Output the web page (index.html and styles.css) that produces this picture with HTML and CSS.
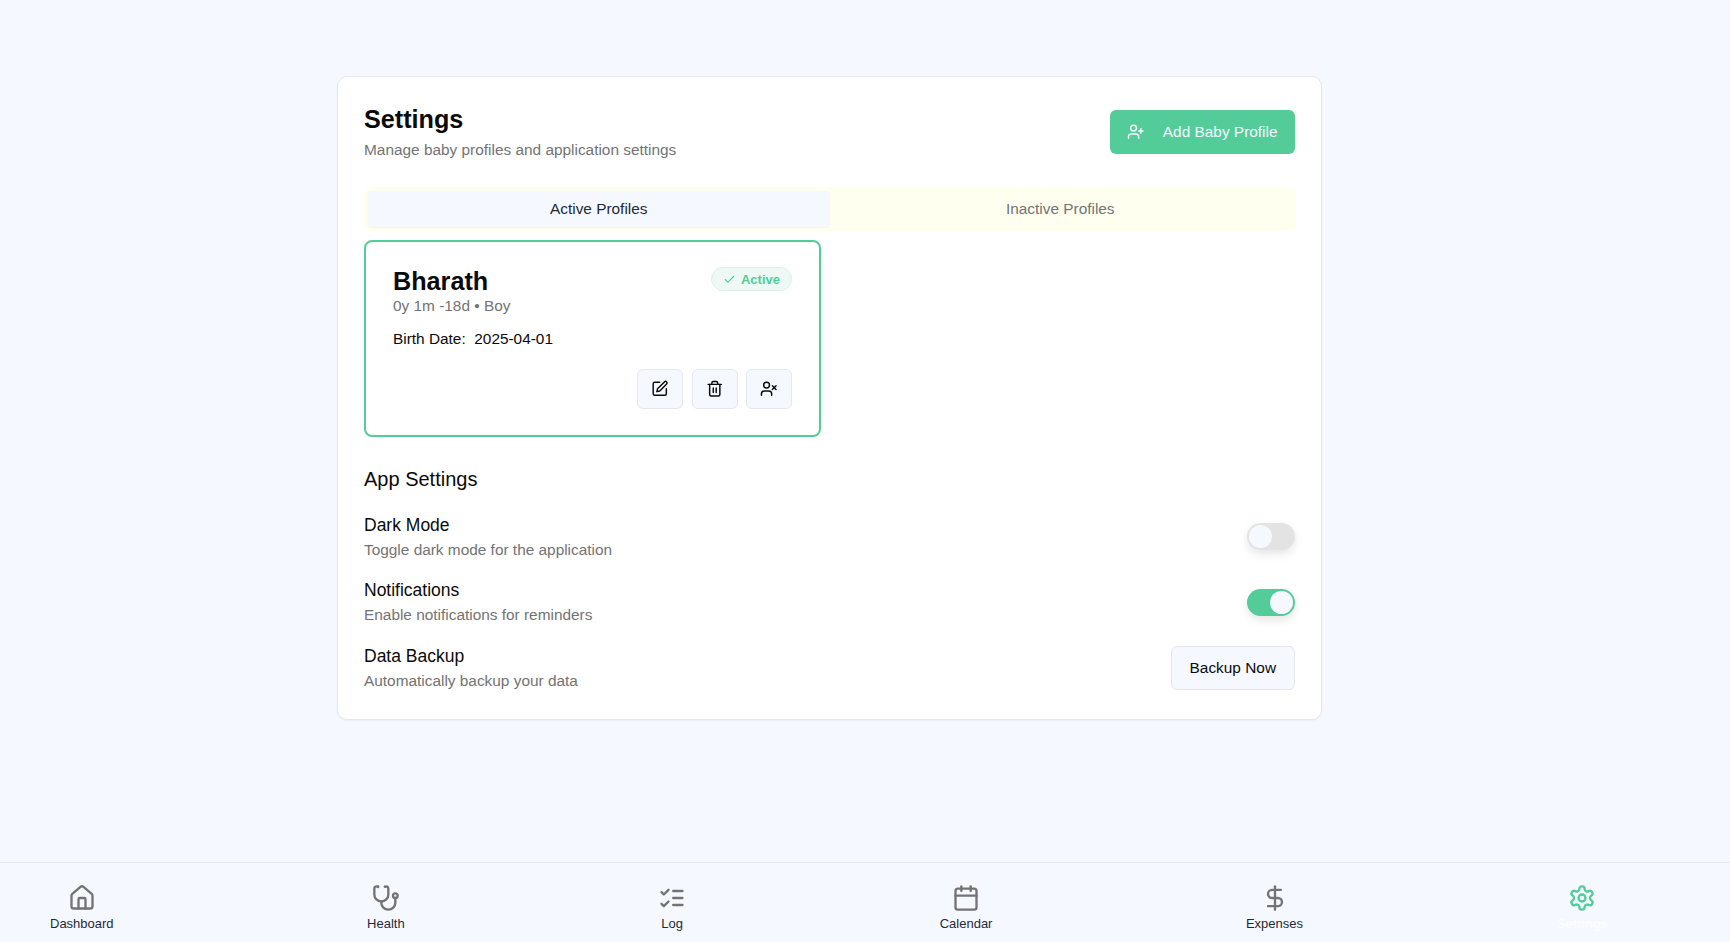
FILE: index.html
```html
<!DOCTYPE html>
<html lang="en">
<head>
  <meta charset="UTF-8" />
  <meta name="viewport" content="width=device-width, initial-scale=1" />
  <title>Settings</title>
  <link rel="stylesheet" href="styles.css">
</head>
<body>
  <main class="page">
    <section class="card">
      <header class="head">
        <div>
          <h1>Settings</h1>
          <p class="muted sub">Manage baby profiles and application settings</p>
        </div>
        <button class="add-btn">
          <svg class="icon" viewBox="0 0 24 24"><path d="M16 21v-2a4 4 0 0 0-4-4H6a4 4 0 0 0-4 4v2"/><circle cx="9" cy="7" r="4"/><path d="M19 8v6"/><path d="M22 11h-6"/></svg>
          <span>Add Baby Profile</span>
        </button>
      </header>

      <div class="tabs">
        <div class="tab on">Active Profiles</div>
        <div class="tab">Inactive Profiles</div>
      </div>

      <div class="profiles">
        <article class="profile">
          <div class="profile-top">
            <div>
              <h2>Bharath</h2>
              <p class="muted age">0y 1m -18d • Boy</p>
            </div>
            <span class="badge">
              <svg viewBox="0 0 24 24"><path d="M20 6 9 17l-5-5"/></svg>
              Active
            </span>
          </div>
          <p class="birth">Birth Date:&nbsp; 2025-04-01</p>
          <div class="actions">
            <button class="act"><svg class="icon" viewBox="0 0 24 24"><path d="M12 3H5a2 2 0 0 0-2 2v14a2 2 0 0 0 2 2h14a2 2 0 0 0 2-2v-7"/><path d="M18.4 2.6a2.1 2.1 0 1 1 3 3L12 15l-4 1 1-4Z"/></svg></button>
            <button class="act"><svg class="icon" viewBox="0 0 24 24"><path d="M3 6h18"/><path d="M19 6v14a2 2 0 0 1-2 2H7a2 2 0 0 1-2-2V6"/><path d="M8 6V4a2 2 0 0 1 2-2h4a2 2 0 0 1 2 2v2"/><path d="M10 11v6"/><path d="M14 11v6"/></svg></button>
            <button class="act"><svg class="icon" viewBox="0 0 24 24"><path d="M16 21v-2a4 4 0 0 0-4-4H6a4 4 0 0 0-4 4v2"/><circle cx="9" cy="7" r="4"/><path d="m17 8 5 5"/><path d="m22 8-5 5"/></svg></button>
          </div>
        </article>
      </div>

      <h3>App Settings</h3>
      <div class="rows">
        <div class="row">
          <div class="row-text">
            <div class="row-title">Dark Mode</div>
            <p class="muted">Toggle dark mode for the application</p>
          </div>
          <span class="switch"><span class="knob"></span></span>
        </div>
        <div class="row">
          <div class="row-text">
            <div class="row-title">Notifications</div>
            <p class="muted">Enable notifications for reminders</p>
          </div>
          <span class="switch on"><span class="knob"></span></span>
        </div>
        <div class="row">
          <div class="row-text">
            <div class="row-title">Data Backup</div>
            <p class="muted">Automatically backup your data</p>
          </div>
          <button class="backup">Backup Now</button>
        </div>
      </div>
    </section>
  </main>

  <nav class="bottom-nav">
    <a class="nav-item"><svg class="icon" viewBox="0 0 24 24"><path d="M15 21v-8a1 1 0 0 0-1-1h-4a1 1 0 0 0-1 1v8"/><path d="M3 10a2 2 0 0 1 .7-1.5l7-6a2 2 0 0 1 2.6 0l7 6A2 2 0 0 1 21 10v9a2 2 0 0 1-2 2H5a2 2 0 0 1-2-2z"/></svg><span>Dashboard</span></a>
    <a class="nav-item"><svg class="icon" viewBox="0 0 24 24"><path d="M4.8 2.3A.3.3 0 1 0 5 2H4a2 2 0 0 0-2 2v5a6 6 0 0 0 6 6 6 6 0 0 0 6-6V4a2 2 0 0 0-2-2h-1a.2.2 0 1 0 .3.3"/><path d="M8 15v1a6 6 0 0 0 6 6 6 6 0 0 0 6-6v-4"/><circle cx="20" cy="10" r="2"/></svg><span>Health</span></a>
    <a class="nav-item"><svg class="icon" viewBox="0 0 24 24"><path d="m3 17 2 2 4-4"/><path d="m3 7 2 2 4-4"/><path d="M13 6h8"/><path d="M13 12h8"/><path d="M13 18h8"/></svg><span>Log</span></a>
    <a class="nav-item"><svg class="icon" viewBox="0 0 24 24"><path d="M8 2v4"/><path d="M16 2v4"/><rect x="3" y="4" width="18" height="18" rx="2"/><path d="M3 10h18"/></svg><span>Calendar</span></a>
    <a class="nav-item"><svg class="icon" viewBox="0 0 24 24"><path d="M12 2v20"/><path d="M17 5H9.500a3.500 3.500 0 0 0 0 7h5a3.500 3.500 0 0 1 0 7H6"/></svg><span>Expenses</span></a>
    <a class="nav-item current"><svg class="icon" viewBox="0 0 24 24"><path d="M12.22 2h-.44a2 2 0 0 0-2 2v.18a2 2 0 0 1-1 1.73l-.43.25a2 2 0 0 1-2 0l-.15-.08a2 2 0 0 0-2.73.73l-.22.38a2 2 0 0 0 .73 2.73l.15.1a2 2 0 0 1 1 1.72v.51a2 2 0 0 1-1 1.74l-.15.09a2 2 0 0 0-.73 2.73l.22.38a2 2 0 0 0 2.73.73l.15-.08a2 2 0 0 1 2 0l.43.25a2 2 0 0 1 1 1.73V20a2 2 0 0 0 2 2h.44a2 2 0 0 0 2-2v-.18a2 2 0 0 1 1-1.73l.43-.25a2 2 0 0 1 2 0l.15.08a2 2 0 0 0 2.73-.73l.22-.39a2 2 0 0 0-.73-2.73l-.15-.08a2 2 0 0 1-1-1.74v-.5a2 2 0 0 1 1-1.74l.15-.09a2 2 0 0 0 .73-2.73l-.22-.38a2 2 0 0 0-2.73-.73l-.15.08a2 2 0 0 1-2 0l-.43-.25a2 2 0 0 1-1-1.73V4a2 2 0 0 0-2-2z"/><circle cx="12" cy="12" r="3"/></svg><span>Settings</span></a>
  </nav>
</body>
</html>
```

FILE: styles.css
```css
html, body {
  height: 100%;
  margin: 0;
}

body {
  display: flex;
  flex-direction: column;
  overflow: hidden;
  background: #f5f9ff;
  color: #0a0a0a;
  font-family: "Liberation Sans", Arial, sans-serif;
}

h1, h2, h3, p {
  margin: 0;
}

button {
  font-family: inherit;
  cursor: pointer;
}

.icon {
  width: 28px;
  height: 28px;
  fill: none;
  stroke: currentColor;
  stroke-width: 2;
  stroke-linecap: round;
  stroke-linejoin: round;
}

.muted {
  color: #737373;
  font-size: 15.4px;
  line-height: 24px;
}

.page {
  flex: 1;
  padding: 76px 0 0 337px;
}

.card {
  box-sizing: border-box;
  width: 985px;
  height: 644px;
  padding: 24px 26px;
  background: #fff;
  border: 1px solid #e5e7eb;
  border-radius: 10px;
  box-shadow: 0 1px 2px rgba(0,0,0,0.04);
}

.head {
  display: flex;
  justify-content: space-between;
  align-items: center;
  height: 62px;
}

.head h1 {
  font-size: 25.2px;
  line-height: 32px;
}

.sub {
  margin-top: 3px;
}

.add-btn {
  display: flex;
  align-items: center;
  gap: 18px;
  height: 44px;
  padding: 0 17.5px;
  color: #f5f9ff;
  background: #53cc9a;
  border: none;
  border-radius: 6px;
  font-size: 15.4px;
}

.add-btn .icon {
  width: 17.5px;
  height: 17.5px;
}

.tabs {
  display: grid;
  grid-template-columns: 1fr 1fr;
  height: 44px;
  margin-top: 24px;
  padding: 4px;
  box-sizing: border-box;
  background: #fffff0;
  border-radius: 6px;
}

.tab {
  display: flex;
  align-items: center;
  justify-content: center;
  color: #737373;
  font-size: 15.4px;
  border-radius: 4px;
}

.tab.on {
  color: #1f2937;
  background: #f5f9ff;
  box-shadow: 0 1px 2px rgba(0,0,0,0.05);
}

.profiles {
  margin-top: 9px;
}

.profile {
  box-sizing: border-box;
  width: 457px;
  height: 197px;
  padding: 25px 27px;
  border: 2px solid #53cc9a;
  border-radius: 8px;
}

.profile-top {
  display: flex;
  justify-content: space-between;
  align-items: flex-start;
}

.profile h2 {
  font-size: 25.2px;
  line-height: 28px;
}

.age {
  line-height: 22px;
}

.badge {
  display: flex;
  align-items: center;
  gap: 5px;
  box-sizing: border-box;
  height: 24px;
  padding: 0 11px;
  color: #53cc9a;
  background: #eef9f5;
  border: 1px solid #dcefe8;
  border-radius: 12px;
  font-size: 13px;
  font-weight: bold;
}

.badge svg {
  width: 13px;
  height: 13px;
  fill: none;
  stroke: currentColor;
  stroke-width: 2;
  stroke-linecap: round;
  stroke-linejoin: round;
}

.birth {
  margin-top: 12px;
  font-size: 15.4px;
  line-height: 20px;
}

.actions {
  display: flex;
  justify-content: flex-end;
  gap: 8.5px;
  margin-top: 20px;
}

.act {
  display: flex;
  align-items: center;
  justify-content: center;
  width: 46px;
  height: 40px;
  padding: 0;
  color: #0a0a0a;
  background: #f5f9ff;
  border: 1px solid #e5e7eb;
  border-radius: 6px;
}

.act .icon {
  width: 17.5px;
  height: 17.5px;
}

h3 {
  margin-top: 28px;
  font-size: 20px;
  font-weight: normal;
  line-height: 28px;
}

.rows {
  display: flex;
  flex-direction: column;
  gap: 16px;
  margin-top: 19px;
}

.row {
  display: flex;
  justify-content: space-between;
  align-items: center;
  height: 49.5px;
}

.row-text {
  padding-top: 1px;
}

.row-title {
  font-size: 17.5px;
  line-height: 25px;
}

.switch {
  display: flex;
  box-sizing: border-box;
  width: 48px;
  height: 27px;
  padding: 2px;
  background: #e3e3e3;
  border-radius: 14px;
  box-shadow: 0 4px 10px rgba(0,0,0,0.1);
}

.switch.on {
  justify-content: flex-end;
  background: #53cc9a;
}

.knob {
  width: 23px;
  height: 23px;
  background: #f5f9ff;
  border-radius: 50%;
}

.backup {
  height: 44px;
  padding: 0 18px;
  color: #0a0a0a;
  background: #f5f9ff;
  border: 1px solid #e5e7eb;
  border-radius: 6px;
  font-size: 15.4px;
}

.bottom-nav {
  display: flex;
  gap: 253.5px;
  box-sizing: border-box;
  height: 80px;
  padding: 21px 0 0 50px;
  background: #f5f9ff;
  border-top: 1px solid #e5e7eb;
}

.nav-item {
  display: flex;
  flex-direction: column;
  align-items: center;
  gap: 3px;
  color: #737373;
}

.nav-item span {
  color: #1f2937;
  font-size: 13px;
  line-height: 18px;
}

.nav-item.current {
  color: #53cc9a;
}

.nav-item.current span {
  color: #fcfdff;
  font-weight: bold;
}
```
